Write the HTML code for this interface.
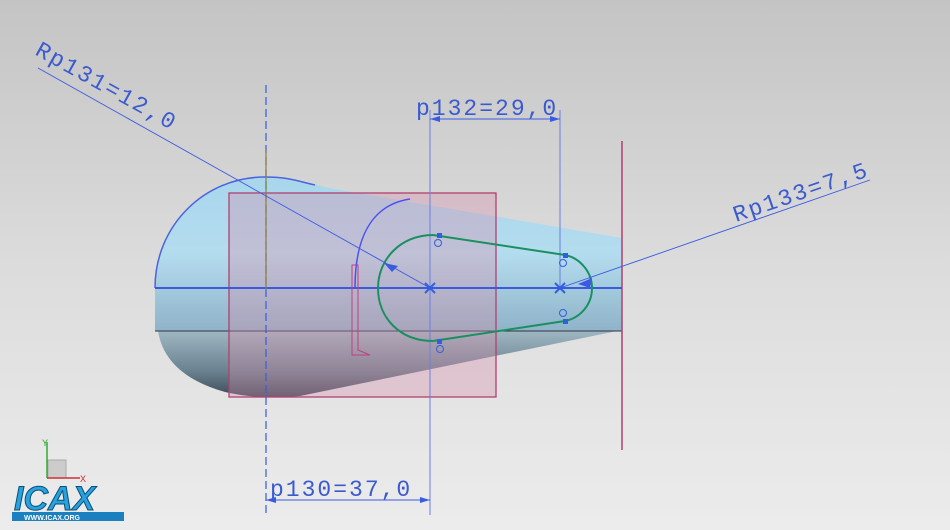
<!DOCTYPE html>
<html><head><style>
html,body{margin:0;padding:0;width:950px;height:530px;overflow:hidden}
body{background:linear-gradient(#c4c4c4,#dcdcdc 50%,#ececec)}
svg{position:absolute;left:0;top:0}
text{font-family:"Liberation Mono",monospace;fill:#3a5ad0}
</style></head><body>
<svg width="950" height="530" viewBox="0 0 950 530">
<defs>
<linearGradient id="up" x1="0" y1="0" x2="0" y2="1">
<stop offset="0" stop-color="#a9d6ec"/><stop offset="0.5" stop-color="#b4dcef"/><stop offset="1" stop-color="#8fb3c8"/></linearGradient>
<linearGradient id="lo" x1="0" y1="0" x2="0" y2="1">
<stop offset="0" stop-color="#9fb8c4"/><stop offset="0.6" stop-color="#6b8390"/><stop offset="1" stop-color="#3c4a58"/></linearGradient>
</defs>
<path d="M158,331 Q165,375 225,392 Q260,400 300,396 L622,330 Z" fill="url(#lo)"/>
<path d="M155,288 C155,225 205,177 265,177 C300,177 310,185 340,190 L622,238 L622,331 L155,331 Z" fill="url(#up)"/>
<path d="M155,288 C155,225 205,177 265,177 C290,177 300,182 315,185" fill="none" stroke="#4a64e0" stroke-width="1.5"/>
<line x1="155" y1="331" x2="622" y2="331" stroke="#334" stroke-width="1"/>
<rect x="229" y="193" width="267" height="204" fill="rgba(215,140,170,0.35)" stroke="#b04070" stroke-width="1.3"/>
<line x1="622" y1="141" x2="622" y2="450" stroke="#b04070" stroke-width="1.5"/>
<line x1="155" y1="288" x2="622" y2="288" stroke="#3a5ae0" stroke-width="2"/>
<line x1="266" y1="85" x2="266" y2="515" stroke="#3a5ae0" stroke-width="1.2" stroke-dasharray="8,4"/>
<line x1="266" y1="150" x2="266" y2="290" stroke="#8a8040" stroke-width="1.2"/>
<line x1="430" y1="110" x2="430" y2="515" stroke="#6a80e0" stroke-width="1"/>
<line x1="560" y1="110" x2="560" y2="290" stroke="#6a80e0" stroke-width="1"/>
<path d="M355,288 C355,240 370,205 410,199" fill="none" stroke="#4a50f0" stroke-width="1.5"/>
<path d="M352,265 L358,265 L358,350 L370,355 L352,355 Z" fill="none" stroke="#c04080" stroke-width="1"/>
<path d="M433,235 C400,235 378,260 378,288 C378,318 400,341 433,341 L565,321 C580,318 592,305 592,288 C592,272 580,258 565,255 Z" fill="none" stroke="#1a9060" stroke-width="2"/>
<g fill="#3060e0"><rect x="437" y="233" width="5" height="5"/><rect x="437" y="339" width="5" height="5"/><rect x="563" y="253" width="5" height="5"/><rect x="563" y="319" width="5" height="5"/></g>
<g fill="none" stroke="#3060e0"><circle cx="438" cy="243" r="3.5"/><circle cx="440" cy="349" r="3.5"/><circle cx="563" cy="263" r="3.5"/><circle cx="563" cy="313" r="3.5"/></g>
<g stroke="#3060e0" stroke-width="2"><path d="M425,283 l10,10 M435,283 l-10,10 M555,283 l10,10 M565,283 l-10,10"/></g>
<g stroke="#3a5ae0" stroke-width="0.9" fill="none">
<line x1="38" y1="68" x2="430" y2="288"/>
<line x1="560" y1="288" x2="870" y2="180"/>
<line x1="266" y1="500" x2="430" y2="500"/><line x1="430" y1="119" x2="560" y2="119"/>
</g>
<g fill="#3a5ae0"><path d="M384,263 l14,3 l-6,6 z"/><path d="M592,278 l-14,6 l12,4 z"/>
<path d="M266,500 l10,-3 v6z"/><path d="M430,500 l-10,-3 v6z"/><path d="M430,119 l10,-3 v6z"/><path d="M560,119 l-10,-3 v6z"/></g>
<g font-size="23" letter-spacing="2">
<text transform="translate(34,54) rotate(29)">Rp131=12,0</text>
<text x="416" y="115">p132=29,0</text>
<text transform="translate(736,222) rotate(-19)">Rp133=7,5</text>
<text x="270" y="496">p130=37,0</text>
</g>
<rect x="48" y="460" width="18" height="18" fill="#ccc" stroke="#aaa"/>
<line x1="47" y1="478" x2="47" y2="442" stroke="#3a3" stroke-width="1.5"/>
<line x1="47" y1="478" x2="80" y2="478" stroke="#c33" stroke-width="1.5"/>
<text x="42" y="446" font-size="10" style="fill:#3a3">Y</text><text x="80" y="482" font-size="10" style="fill:#c33">X</text>
<text x="14" y="510" font-size="34" font-style="italic" font-weight="bold" style="font-family:'Liberation Sans',sans-serif;fill:#2aa0dc;stroke:#05507a;stroke-width:1">ICAX</text>
<rect x="12" y="512" width="112" height="9" fill="#1a80c0"/>
<text x="24" y="520" font-size="7" font-weight="bold" style="font-family:'Liberation Sans',sans-serif;fill:#fff">WWW.ICAX.ORG</text>
</svg>
</body></html>
